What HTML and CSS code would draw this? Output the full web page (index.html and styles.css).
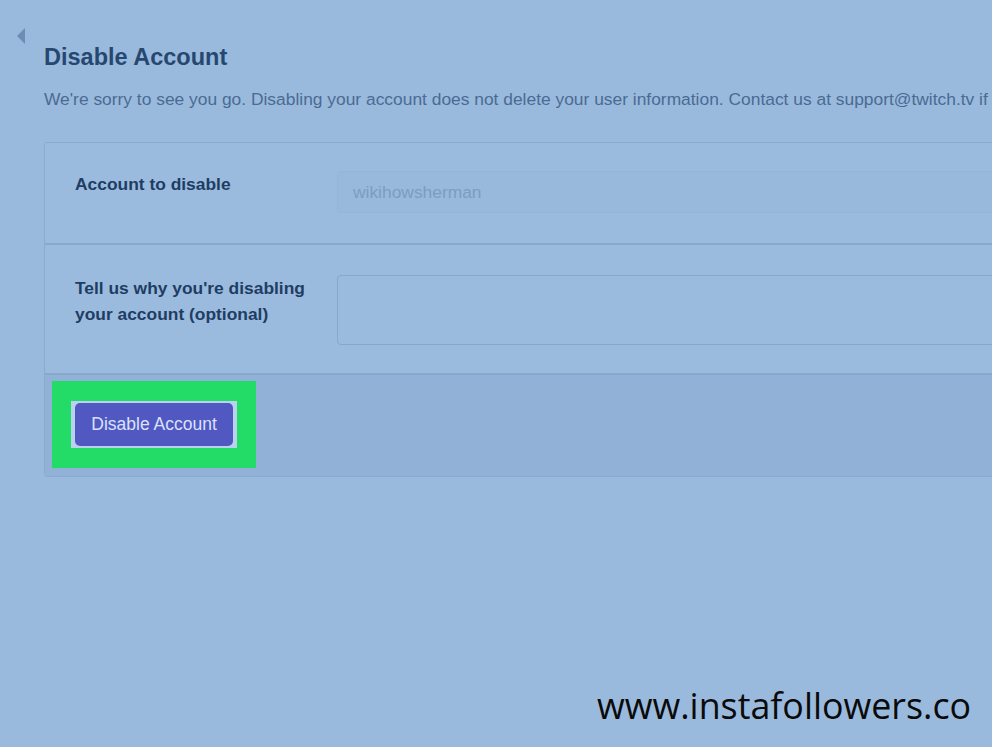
FILE: index.html
```html
<!DOCTYPE html>
<html lang="en">
<head>
    <meta charset="UTF-8">
    <title>Disable Account</title>
    <link rel="stylesheet" href="styles.css">
</head>
<body>
    <div class="page">
        <span class="back"></span>

        <h1>Disable Account</h1>
        <p class="intro">We're sorry to see you go. Disabling your account does not delete your user information. Contact us at support@twitch.tv if</p>

        <!-- Formulaire -->
        <div class="card">
            <div class="row">
                <label class="row-label">Account to disable</label>
                <div class="field field-readonly">wikihowsherman</div>
            </div>
            <div class="row row-reason">
                <label class="row-label">Tell us why you're disabling<br>your account (optional)</label>
                <div class="field field-area"></div>
            </div>
            <div class="card-footer">
                <div class="highlight">
                    <div class="btn-wrap">
                        <button class="btn">Disable Account</button>
                    </div>
                </div>
            </div>
        </div>
    </div>

    <div class="watermark">www.instafollowers.co</div>
</body>
</html>
```

FILE: styles.css
```css
* { box-sizing: border-box; margin: 0; padding: 0; }
html, body { height: 100%; overflow: hidden; }
body {
    font-family: 'Liberation Sans', Arial, sans-serif;
    background-color: #9abadd;
    color: #23436a;
    position: relative;
}

.page { padding: 44px 0 0 44px; width: 1100px; }
.back { position: absolute; left: 17px; top: 28px; width: 0; height: 0; border-top: 8px solid transparent; border-bottom: 8px solid transparent; border-right: 8px solid #6d8db4; }

h1 { font-size: 23.5px; font-weight: bold; color: #264870; line-height: 27px; }
.intro { font-size: 17.4px; color: #4a6b93; margin-top: 18px; white-space: nowrap; line-height: 20px; }

.card { margin-top: 33px; border: 1px solid #8aaad0; border-radius: 3px; background-color: #9abbde; }
.row { display: flex; align-items: flex-start; padding: 28px 0 30px 30px; border-bottom: 2px solid #88a8ce; }
.row-label { width: 262px; font-size: 17.4px; font-weight: bold; color: #1f3d63; line-height: 26px; }
.field { flex: 1; border-radius: 4px; }
.field-readonly { height: 42px; background-color: #98b9dc; border: 1px solid #95b6da; padding: 10px 15px; font-size: 17.4px; color: #7d9cc1; }
.row-reason { padding-top: 30px; padding-bottom: 28px; }
.field-area { height: 70px; border: 1px solid #87a7cd; background-color: #9abbde; }

.card-footer { background-color: #91b1d6; padding: 6px 0 7px 7px; height: 101px; }
.highlight { width: 204px; height: 87px; background-color: #22dc67; padding: 20px 0 0 19px; }
.btn-wrap { width: 166px; height: 47px; background-color: #b8d2f0; padding: 2px 3px 2px 4px; }
.btn { width: 158px; height: 43px; border: none; border-radius: 5px; background-color: #5158c2; color: #d9e2fa; font-family: 'Liberation Sans', Arial, sans-serif; font-size: 17.5px; }

.watermark { position: absolute; left: 597px; top: 681px; font-family: 'Open Sans', sans-serif; font-size: 35.8px; color: #0a0a0a; }
```
